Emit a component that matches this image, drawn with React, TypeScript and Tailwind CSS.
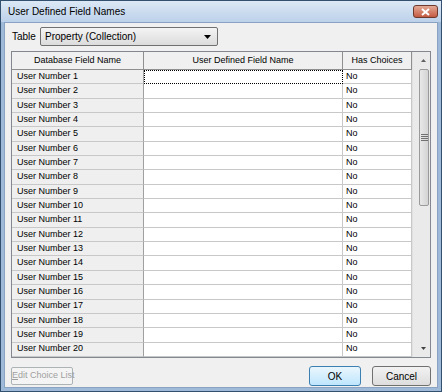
import React from 'react';

const rows = Array.from({ length: 20 }, (_, i) => `User Number ${i + 1}`);

const ui = { fontFamily: '"Liberation Sans", Arial, sans-serif' };

export default function App() {
  return (
    <div className="w-[442px] h-[392px] bg-[#9fb9d9] border border-[#34506f] flex flex-col overflow-hidden" style={ui}>
      {/* Title bar */}
      <div className="h-[22px] flex items-center justify-between pl-[7px] pr-[3px] bg-gradient-to-b from-[#dce8f5] to-[#bcd1ea]">
        <span className="text-[10px] text-black">User Defined Field Names</span>
        <button className="w-[25px] h-[13px] rounded-[3px] border border-[#6d3a2c] bg-gradient-to-b from-[#e3a996] to-[#c45a43] flex items-center justify-center">
          <svg width="9" height="8" viewBox="0 0 9 8">
            <path d="M1 1 L8 7 M8 1 L1 7" stroke="#ffffff" strokeWidth="2" />
          </svg>
        </button>
      </div>

      {/* Client area */}
      <div className="flex-1 mx-[3px] mb-[3px] bg-[#f0f0f0] border border-[#8aa3c2] flex flex-col px-[6px] pt-[4px] pb-[1px]">
        <div className="flex items-center h-[19px] pl-[1px]">
          <span className="text-[10px] text-black w-[28px]">Table</span>
          <div className="w-[178px] h-[19px] border border-[#707070] rounded-[2px] bg-gradient-to-b from-[#f4f4f4] to-[#dcdcdc] flex items-center justify-between pl-[4px] pr-[6px]">
            <span className="text-[10px] text-black">Property (Collection)</span>
            <svg width="7" height="4" viewBox="0 0 7 4">
              <path d="M0 0 L7 0 L3.5 4 Z" fill="#000" />
            </svg>
          </div>
        </div>

        {/* Grid */}
        <div className="mt-[5px] h-[307px] border border-[#828790] bg-white flex overflow-hidden">
          <div className="flex flex-col w-[400px]">
            <div className="flex h-[18px] shrink-0 bg-[#f0f0f0] border-b border-[#8f8f8f] text-[9px] text-black">
              <div className="w-[132px] flex items-center justify-center border-r border-[#8f8f8f]">Database Field Name</div>
              <div className="w-[199px] flex items-center justify-center border-r border-[#8f8f8f]">User Defined Field Name</div>
              <div className="w-[69px] flex items-center justify-center border-r border-[#8f8f8f]">Has Choices</div>
            </div>
            {rows.map((r, i) => (
              <div key={r} className="flex h-[14.35px] shrink-0 text-[9px] text-black">
                <div className="w-[132px] flex items-center pl-[5px] bg-[#efefef] border-r border-b border-[#a0a0a0] border-b-[#c8c8c8]">{r}</div>
                <div className={i === 0 ? 'w-[199px] border border-dotted border-black' : 'w-[199px] border-r border-b border-[#c8c8c8]'}></div>
                <div className="w-[69px] flex items-center pl-[3px] border-r border-b border-[#c8c8c8]">No</div>
              </div>
            ))}
          </div>

          {/* Scrollbar */}
          <div className="flex-1 flex flex-col bg-[#eaeaea] border-l border-[#e0e0e0]">
            <div className="h-[17px] flex items-center justify-center pl-[3px]">
              <svg width="5" height="3" viewBox="0 0 5 3"><path d="M0 3 L5 3 L2.5 0 Z" fill="#606060" /></svg>
            </div>
            <div className="flex-1 flex flex-col pl-[6px] pr-[1px]">
              <div className="h-[137px] rounded-[2px] border border-[#9a9a9a] bg-gradient-to-r from-[#e8e8e8] to-[#d4d4d4] flex items-center justify-center">
                <svg width="7" height="7" viewBox="0 0 7 7">
                  <path d="M0 0.5 H7 M0 2.5 H7 M0 4.5 H7 M0 6.5 H7" stroke="#707070" strokeWidth="1" />
                </svg>
              </div>
            </div>
            <div className="h-[17px] flex items-center justify-center pl-[3px]">
              <svg width="5" height="3" viewBox="0 0 5 3"><path d="M0 0 L5 0 L2.5 3 Z" fill="#404040" /></svg>
            </div>
          </div>
        </div>

        {/* Buttons */}
        <div className="flex items-center mt-[8px] h-[20px]">
          <button className="w-[62px] h-[18px] border border-[#adb2b5] rounded-[2px] bg-[#f4f4f4] text-[9px] text-[#a0a0a0] whitespace-nowrap">
            <span className="underline">E</span>dit Choice List
          </button>
          <div className="flex-1" />
          <button className="w-[52px] h-[20px] border border-[#3c7fb1] rounded-[3px] bg-gradient-to-b from-[#eaf6fd] to-[#bee6fd] text-[10px] text-black">
            OK
          </button>
          <button className="ml-[11px] w-[59px] h-[20px] border border-[#707070] rounded-[3px] bg-gradient-to-b from-[#f2f2f2] to-[#dddddd] text-[10px] text-black">
            Cancel
          </button>
        </div>
      </div>
    </div>
  );
}
